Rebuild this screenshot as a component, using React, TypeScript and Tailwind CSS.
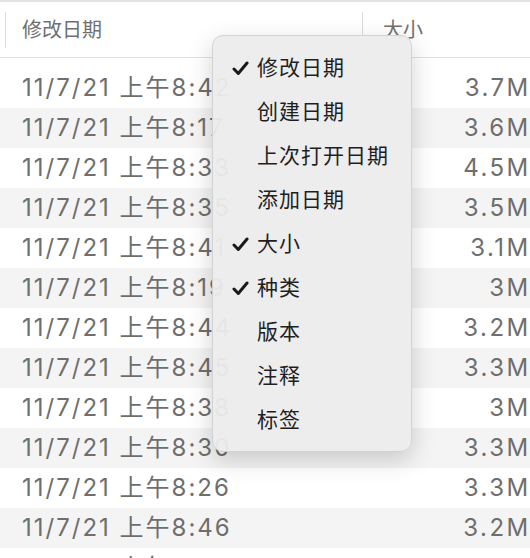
import React from "react";

const rows = [
  { time: "8:42", size: "3.7" },
  { time: "8:17", size: "3.6" },
  { time: "8:33", size: "4.5" },
  { time: "8:35", size: "3.5" },
  { time: "8:41", size: "3.1" },
  { time: "8:19", size: "3" },
  { time: "8:44", size: "3.2" },
  { time: "8:45", size: "3.3" },
  { time: "8:38", size: "3" },
  { time: "8:30", size: "3.3" },
  { time: "8:26", size: "3.3" },
  { time: "8:46", size: "3.2" },
  { time: "8:27", size: "3.1" },
];

const menu = [
  { label: "修改日期", checked: true },
  { label: "创建日期", checked: false },
  { label: "上次打开日期", checked: false },
  { label: "添加日期", checked: false },
  { label: "大小", checked: true },
  { label: "种类", checked: true },
  { label: "版本", checked: false },
  { label: "注释", checked: false },
  { label: "标签", checked: false },
];

const Check = () => (
  <svg width="17" height="15" viewBox="0 0 17 15" className="shrink-0">
    <path
      d="M2 8 L6.3 12.5 L15 2"
      fill="none"
      stroke="#1a1a1a"
      strokeWidth="3"
      strokeLinecap="round"
      strokeLinejoin="round"
    />
  </svg>
);

export default function App() {
  return (
    <div
      className="relative w-[530px] h-[558px] overflow-hidden bg-white"
      style={{ fontFamily: 'Inter, "Noto Sans CJK SC", sans-serif' }}
    >
      {/* header */}
      <div className="h-[58px] border-t-2 border-b border-[#e2e2e2] flex items-center">
        <div className="w-[357px] h-[36px] border-l border-[#dcdcdc] ml-[5px] flex items-center pl-[16px] text-[20px] text-[#707070]">
          修改日期
        </div>
        <div className="h-[36px] border-l border-[#dcdcdc] flex items-center pl-[20px] text-[20px] text-[#707070]">
          大小
        </div>
      </div>
      <div className="h-[10px]" />

      {/* rows */}
      <div className="flex flex-col">
        {rows.map((r, i) => (
          <div
            key={i}
            className={`h-[40px] flex items-center justify-between pl-[22px] text-[24px] tracking-[2px] text-[#6e6e6e] whitespace-nowrap ${
              i % 2 === 1 ? "bg-[#f4f4f4]" : "bg-white"
            }`}
          >
            <span>11/7/21 上午8:{r.time.slice(2)}</span>
            <span className="mr-[-19px] tracking-[2.5px]">{r.size}MB</span>
          </div>
        ))}
      </div>

      {/* context menu */}
      <div className="absolute left-[212px] top-[35px] w-[200px] h-[417px] rounded-[11px] bg-[#ececec]/95 border border-[#d2d2d2] shadow-[0_8px_24px_rgba(0,0,0,0.18)] pt-[10px] pb-[10px]">
        {menu.map((m) => (
          <div key={m.label} className="h-[44px] flex items-center pl-[19px] text-[21px] text-[#1f1f1f]">
            <div className="w-[25px] flex items-center">{m.checked && <Check />}</div>
            <span className="tracking-[1px]">{m.label}</span>
          </div>
        ))}
      </div>
    </div>
  );
}
